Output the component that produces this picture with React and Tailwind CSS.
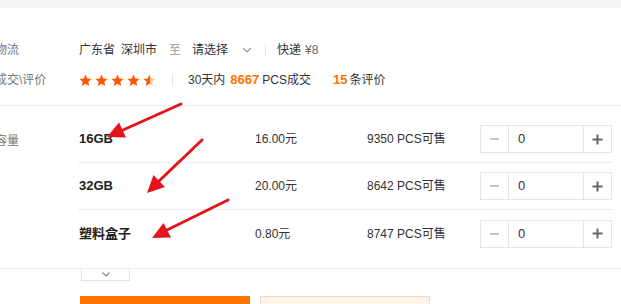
import React from 'react';

const skus = [
  { name: '16GB', price: '16.00元', stock: '9350' },
  { name: '32GB', price: '20.00元', stock: '8642' },
  { name: '塑料盒子', price: '0.80元', stock: '8747' },
];

function Star({ half }) {
  return (
    <svg width="13" height="13" viewBox="0 0 24 24">
      {half && (
        <defs>
          <linearGradient id="halfStar" x1="0" x2="1" y1="0" y2="0">
            <stop offset="50%" stopColor="#ff5a00" />
            <stop offset="50%" stopColor="#ffc9a6" />
          </linearGradient>
        </defs>
      )}
      <path
        d="M12 1l3.2 7.4 8.1.7-6.1 5.3 1.8 7.9L12 18.2l-7 4.1 1.8-7.9-6.1-5.3 8.1-.7z"
        fill={half ? 'url(#halfStar)' : '#ff5a00'}
      />
    </svg>
  );
}

function Stepper() {
  return (
    <div className="flex h-[28px] w-[132px] border border-[#e6e6e6] text-[13px]">
      <div className="w-[28px] flex items-center justify-center border-r border-[#e6e6e6]">
        <span className="block w-[9px] h-[2px] bg-[#c4c4c4]" />
      </div>
      <div className="flex-1 flex items-center pl-[9px] text-[#333]">0</div>
      <div className="w-[28px] flex items-center justify-center border-l border-[#e6e6e6]">
        <svg width="11" height="11" viewBox="0 0 11 11">
          <path d="M5.5 0.5v10M0.5 5.5h10" stroke="#666" strokeWidth="2" />
        </svg>
      </div>
    </div>
  );
}

export default function App() {
  return (
    <div
      className="relative w-[621px] h-[304px] overflow-hidden bg-white text-[12px] text-[#333]"
      style={{ fontFamily: '"Liberation Sans", "Noto Sans CJK SC", sans-serif' }}
    >
      <div className="h-2 bg-[#f5f5f5]" />

      <div className="pt-[27px] pb-[10px] border-b border-[#ececec]">
        <div className="flex items-center h-[30px] -ml-[5px]">
          <div className="w-[84px] text-[#777]">物流</div>
          <span>广东省</span>
          <span className="ml-[6px]">深圳市</span>
          <span className="ml-[12px] text-[#999]">至</span>
          <span className="ml-[11px]">请选择</span>
          <svg className="ml-[14px]" width="10" height="6" viewBox="0 0 10 6">
            <path d="M1 1l4 4 4-4" fill="none" stroke="#999" strokeWidth="1.2" />
          </svg>
          <span className="ml-[13px] w-px h-[11px] bg-[#e3e3e3]" />
          <span className="ml-[11px]">快递</span>
          <span className="ml-[4px] text-[#666]">¥8</span>
        </div>
        <div className="flex items-center h-[30px] -ml-[5px]">
          <div className="w-[84px] text-[#777]">成交\评价</div>
          <div className="flex gap-[3px]">
            <Star />
            <Star />
            <Star />
            <Star />
            <Star half />
          </div>
          <span className="ml-[16px] w-px h-[12px] bg-[#e3e3e3]" />
          <span className="ml-[15px]">30天内</span>
          <span className="ml-[5px] font-bold text-[13px] text-[#ff7300]">8667</span>
          <span className="ml-[3px]">PCS成交</span>
          <span className="ml-[22px] font-bold text-[13px] text-[#ff7300]">15</span>
          <span className="ml-[2px]">条评价</span>
        </div>
      </div>

      <div className="flex pt-[10px] pb-[11px] border-b border-[#ececec] -ml-[5px]">
        <div className="w-[84px] pt-[16px] text-[#777] shrink-0">容量</div>
        <div className="w-[534px]">
          {skus.map((s, i) => (
            <div
              key={s.name}
              className={`flex items-center h-[47px] ${i < skus.length - 1 ? 'border-b border-dotted border-[#dcdcdc]' : ''}`}
            >
              <div className="w-[176px] font-bold text-[13px] text-[#222]">{s.name}</div>
              <div className="w-[112px]">{s.price}</div>
              <div className="w-[113px]">{s.stock} PCS可售</div>
              <Stepper />
            </div>
          ))}
        </div>
      </div>

      <div className="ml-[81px] w-[49px] h-[12px] border border-t-0 border-[#e3e3e3] flex items-center justify-center">
        <svg width="8" height="5" viewBox="0 0 8 5">
          <path d="M0.5 0.5l3.5 3.5 3.5-3.5" fill="none" stroke="#888" strokeWidth="1.2" />
        </svg>
      </div>

      <div className="flex mt-[15px] ml-[80px] gap-[10px]">
        <div className="w-[170px] h-[40px] bg-[#ff7300]" />
        <div className="w-[170px] h-[40px] bg-[#fff4e9] border border-[#f2d9bf]" />
      </div>

      <svg className="absolute inset-0 pointer-events-none" width="621" height="304">
        <g stroke="#e5141c" strokeWidth="3" strokeLinecap="round">
          <line x1="181" y1="104" x2="123" y2="130" />
          <line x1="202" y1="140" x2="159" y2="181" />
          <line x1="228" y1="200" x2="167" y2="230" />
        </g>
        <g fill="#e5141c">
          <polygon points="107,137 126,137.5 119,122.5" />
          <polygon points="147,193 165,187 153.5,175" />
          <polygon points="152,238 171,237.5 163.5,223" />
        </g>
      </svg>
    </div>
  );
}
